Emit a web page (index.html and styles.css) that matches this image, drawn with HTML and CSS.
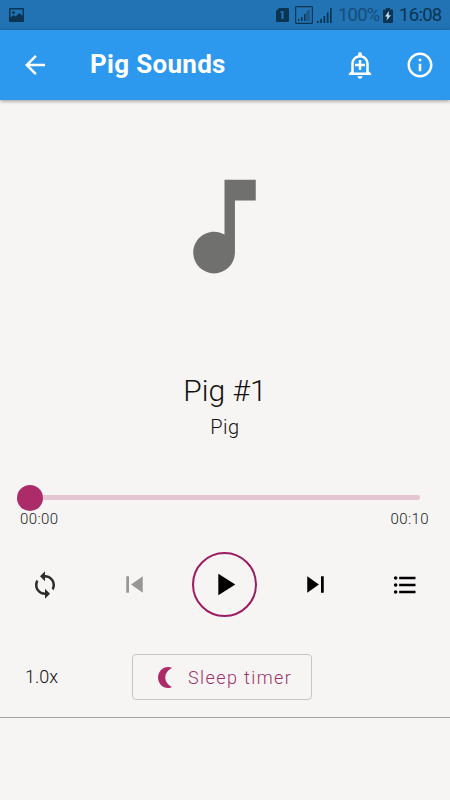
FILE: index.html
```html
<!DOCTYPE html>
<html lang="en">
<head>
<meta charset="utf-8">
<title>Pig Sounds</title>
<link rel="stylesheet" href="styles.css">
</head>
<body>
<div class="status">
  <svg class="status-image" viewBox="0 0 15 14"><path fill-rule="evenodd" d="M1 0h13a1 1 0 0 1 1 1v12a1 1 0 0 1-1 1H1a1 1 0 0 1-1-1V1a1 1 0 0 1 1-1zM1.500 1.500v8l3-2.500 2 1.500 4-3.500 3 3V1.500zM4.500 3a1.500 1.500 0 1 1 0 3 1.500 1.500 0 0 1 0-3z"/></svg>
  <svg class="status-sim" viewBox="0 0 13 14"><path fill-rule="evenodd" d="M3 0h9a1 1 0 0 1 1 1v12a1 1 0 0 1-1 1H1a1 1 0 0 1-1-1V3zM4 4.500h1.500V11h2V3H6.300L4 3.500z"/></svg>
  <svg class="status-box" viewBox="0 0 18 18"><rect class="frame" x=".6" y=".6" width="16.800" height="16.800" rx="1"/><path d="M3 13h1.500v2H3zM6 11h1.500v4H6zM9 8h1.500v7H9z"/><path class="faint" d="M11 6l4-3v12h-4z"/></svg>
  <svg class="status-signal" viewBox="0 0 15 15"><path d="M0 13h1.700v2H0zM3.200 11h1.700v4H3.200zM6.500 8h1.700v7H6.500zM9.800 4.500h1.700V15H9.800zM13 0h1.700v15H13z"/></svg>
  <span class="percent">100%</span>
  <svg class="status-battery" viewBox="0 0 10 15"><path fill-rule="evenodd" d="M3 0h4v1.500h2a1 1 0 0 1 1 1V14a1 1 0 0 1-1 1H1a1 1 0 0 1-1-1V2.500a1 1 0 0 1 1-1h2z"/><path class="bolt" d="M6 3L2 8.500h2.300L3.500 12.500 8 7.200H5.600z"/></svg>
  <span class="clock">16:08</span>
</div>
<header class="appbar">
  <svg class="icon" viewBox="0 0 24 24"><path d="M20 11H7.830l5.590-5.590L12 4l-8 8 8 8 1.410-1.410L7.830 13H20v-2z"/></svg>
  <h1>Pig Sounds</h1>
  <svg class="icon bell" viewBox="0 0 24 24"><path d="M10.010 21.010c0 1.100.89 1.990 1.990 1.990s1.990-.89 1.990-1.990h-3.980zM12 6c2.760 0 5 2.240 5 5v7H7v-7c0-2.760 2.240-5 5-5zm0-4.500c-.83 0-1.500.67-1.500 1.500v1.170C7.360 4.850 5 7.650 5 11v6l-2 2v1h18v-1l-2-2v-6c0-3.350-2.360-6.150-5.500-6.830V3c0-.83-.67-1.500-1.500-1.500zM11 8v3H8v2h3v3h2v-3h3v-2h-3V8h-2z"/></svg>
  <svg class="icon" viewBox="0 0 24 24"><path d="M11 7h2v2h-2zm0 4h2v6h-2zm1-9C6.480 2 2 6.480 2 12s4.480 10 10 10 10-4.480 10-10S17.520 2 12 2zm0 18c-4.410 0-8-3.590-8-8s3.590-8 8-8 8 3.590 8 8-3.590 8-8 8z"/></svg>
</header>
<main>
  <svg class="note" viewBox="0 0 24 24"><path d="M12 3v10.550c-.59-.34-1.270-.55-2-.55-2.210 0-4 1.790-4 4s1.790 4 4 4 4-1.790 4-4V7h4V3h-6z"/></svg>
  <h2>Pig #1</h2>
  <p class="artist">Pig</p>
  <div class="slider"><div class="thumb"></div><div class="track"></div></div>
  <div class="times"><span>00:00</span><span>00:10</span></div>
  <div class="controls">
    <svg class="loop" viewBox="0 0 24 24"><path d="M12 4V1L8 5l4 4V6c3.310 0 6 2.690 6 6 0 1.010-.25 1.970-.7 2.800l1.460 1.460C19.540 15.030 20 13.570 20 12c0-4.420-3.580-8-8-8zm0 14c-3.310 0-6-2.690-6-6 0-1.010.25-1.970.7-2.800L5.240 7.740C4.460 8.970 4 10.430 4 12c0 4.420 3.580 8 8 8v3l4-4-4-4v3z"/></svg>
    <svg class="skip previous" viewBox="0 0 24 24"><path d="M6 6h2v12H6zm3.500 6l8.500 6V6z"/></svg>
    <div class="play"><svg viewBox="0 0 24 24"><path d="M8 5v14l11-7z"/></svg></div>
    <svg class="skip" viewBox="0 0 24 24"><path d="M6 18l8.500-6L6 6v12zM16 6v12h2V6h-2z"/></svg>
    <svg class="list" viewBox="0 0 24 24"><path d="M4 10.500c-.83 0-1.500.67-1.500 1.500s.67 1.500 1.500 1.500 1.500-.67 1.500-1.500-.67-1.500-1.500-1.500zm0-6c-.83 0-1.500.67-1.500 1.500S3.170 7.500 4 7.500 5.500 6.830 5.500 6 4.830 4.500 4 4.500zm0 12c-.83 0-1.500.68-1.500 1.500s.68 1.500 1.500 1.500 1.500-.68 1.500-1.500-.67-1.500-1.500-1.500zM7 19h14v-2H7v2zm0-6h14v-2H7v2zm0-8v2h14V5H7z"/></svg>
  </div>
  <div class="bottom">
    <span class="speed">1.0x</span>
    <div class="timer"><svg viewBox="0 0 14 21"><path d="M14 1C12.500.2 11.500 0 10 0 4.500 0 0 4.700 0 10.500S4.500 21 10 21c1.500 0 2.500-.2 4-1-4-2-6.700-5.500-6.700-9.500S10 3 14 1z"/></svg><span>Sleep timer</span></div>
  </div>
</main>
</body>
</html>
```
FILE: styles.css
```css
* { box-sizing: border-box; }
body {
  margin: 0;
  height: 800px;
  overflow: hidden;
  background: #f7f5f4;
  color: #111;
  font-family: Roboto, sans-serif;
  font-weight: 300;
}
svg { display: block; flex: none; }
h1, h2, p { margin: 0; }

.status {
  height: 30px;
  background: #2173b3;
  display: flex;
  align-items: center;
  padding: 0 10px 0 9px;
  fill: #0b3453;
  color: #0b3453;
  white-space: nowrap;
}
.status-image { width: 15px; height: 14px; }
.status-sim { width: 13px; height: 14px; margin-left: auto; }
.status-box { width: 18px; height: 18px; margin-left: 6px; }
.frame { fill: none; stroke: #0b3453; stroke-width: 1.2; }
.faint { fill: #185c91; }
.status-signal { width: 15px; height: 15px; margin-left: 4px; }
.percent { width: 39px; margin-left: 6px; font-size: 18px; font-weight: 400; color: #164d79; letter-spacing: -0.8px; }
.status-battery { width: 10px; height: 15px; margin-left: 6px; }
.bolt { fill: #c4dff3; }
.clock { width: 41px; margin-left: 6px; font-size: 18px; font-weight: 400; letter-spacing: -0.7px; }
.percent, .clock { font-size: 18.5px; }

.appbar {
  height: 70px;
  background: #2c98ee;
  box-shadow: 0 1px 4px rgba(0, 0, 0, .4);
  display: flex;
  align-items: center;
  padding: 0 15px 0 20px;
  fill: #fff;
  color: #fff;
}
.icon { width: 30px; height: 30px; }
.appbar h1 { margin: -2px 0 0 40px; font-size: 26px; font-weight: 700; line-height: 32px; letter-spacing: .3px; }
.bell { margin-left: auto; margin-right: 30px; }

main { display: flex; flex-direction: column; }
.note { width: 125px; height: 125px; margin: 64px 0 0 162px; fill: #70706e; }
h2 { margin-top: 84px; text-align: center; font-size: 30px; line-height: 36px; font-weight: 300; }
.artist { margin-top: 6px; text-align: center; font-size: 20px; line-height: 24px; letter-spacing: .5px; }
.slider { display: flex; align-items: center; height: 25px; margin: 46px 30px 0 17px; }
.thumb { width: 26px; height: 26px; border-radius: 50%; background: #ab2c69; flex: none; }
.track { flex: 1; height: 5px; border-radius: 0 3px 3px 0; background: #e5c5d1; }
.times { display: flex; justify-content: space-between; padding: 0 21px 0 20px; font-size: 15px; line-height: 18px; letter-spacing: .4px; color: #222; }
.controls { display: flex; align-items: center; height: 65px; margin-top: 24px; padding: 0 31px 0 30px; }
.loop { width: 30px; height: 30px; fill: #2c2c2c; }
.skip { width: 33px; height: 33px; margin-left: 42px; }
.previous { margin-left: 58px; fill: #979797; }
.play { width: 65px; height: 65px; margin-left: 41px; border: 2px solid #9c1c60; border-radius: 50%; display: flex; align-items: center; justify-content: center; }
.play svg { width: 37px; height: 37px; }
.list { width: 28px; height: 28px; margin-left: auto; }
.bottom { display: flex; align-items: flex-start; height: 101px; border-bottom: 1px solid #a4a4a4; padding: 37px 0 0 25px; }
.speed { width: 107px; font-size: 18px; line-height: 46px; }
.timer { display: flex; align-items: center; width: 180px; height: 46px; border: 1px solid #c6c5c4; border-radius: 4px; padding-left: 25px; color: #9c326b; font-size: 18px; letter-spacing: 1.4px; white-space: nowrap; }
.timer svg { width: 14px; height: 21px; margin-right: 16px; fill: #ab2c69; }
```
